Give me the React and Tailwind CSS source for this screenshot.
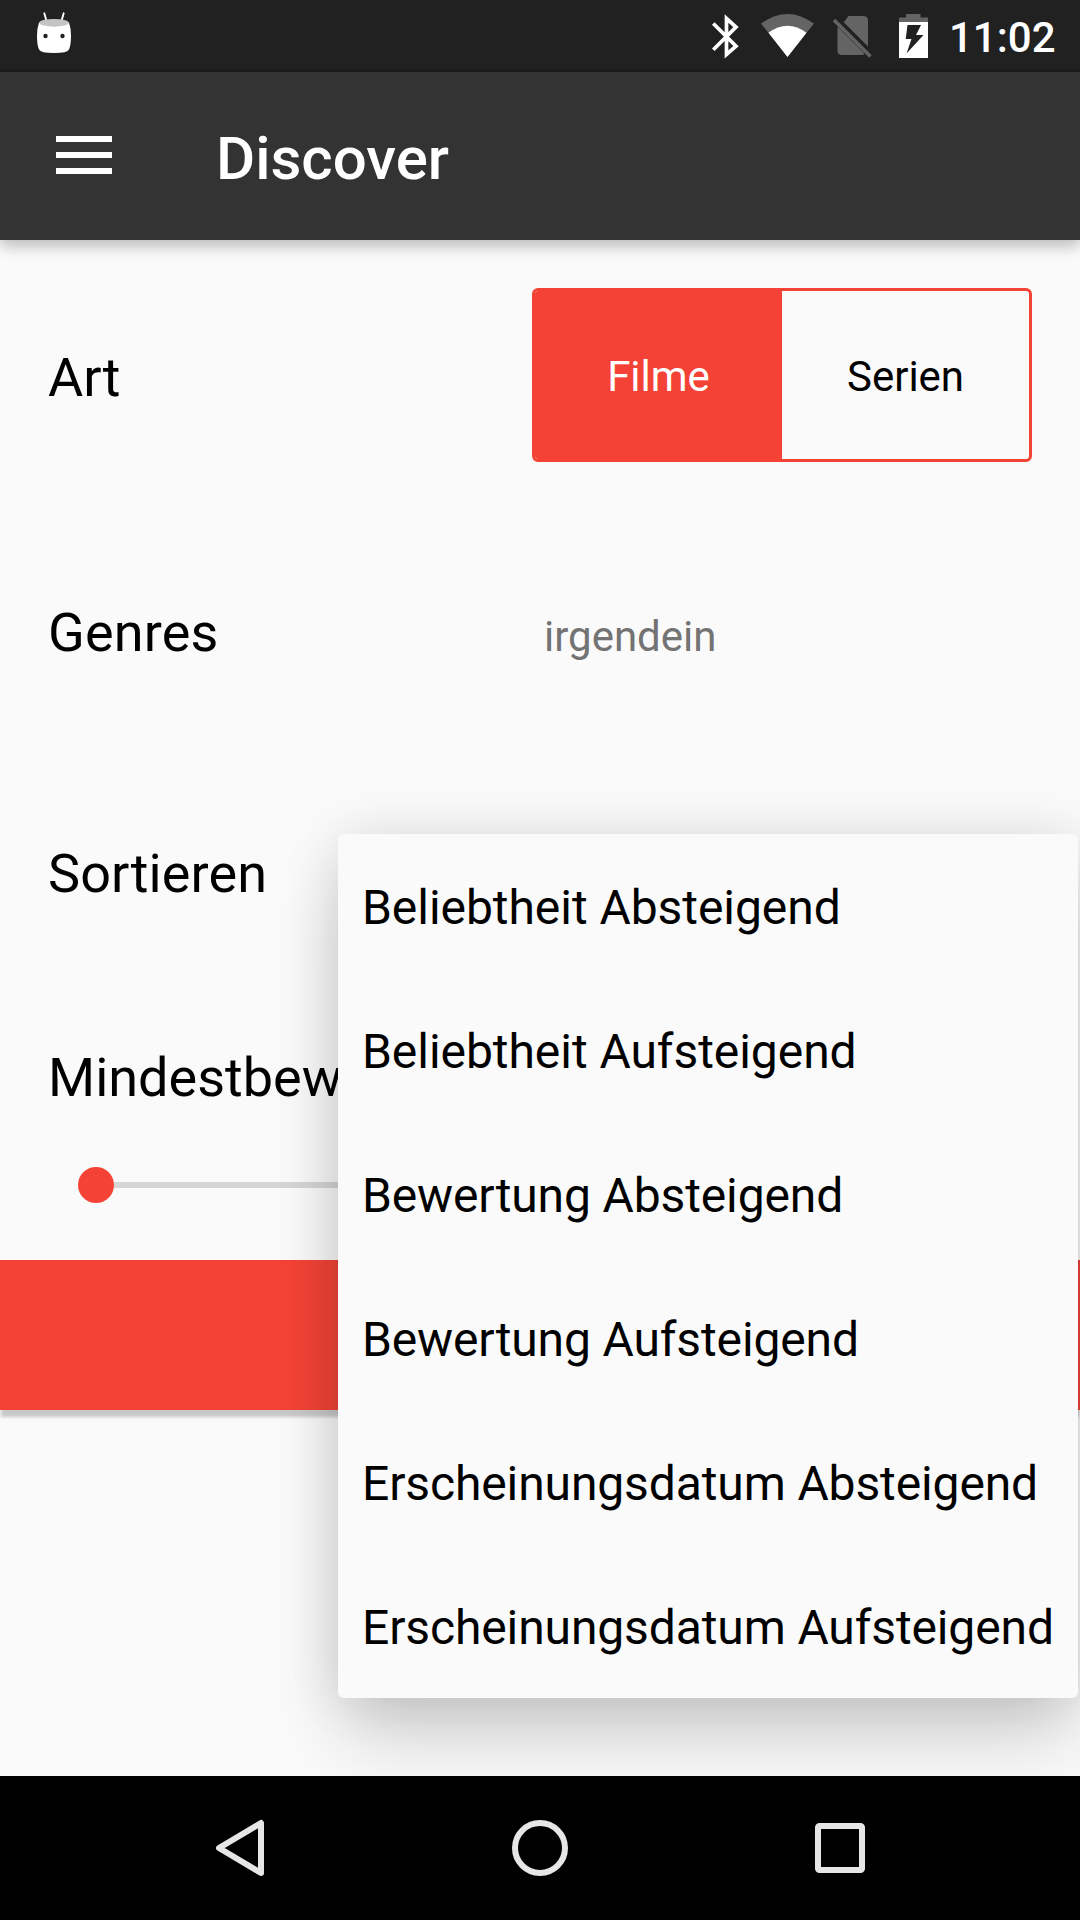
const sortOptions = [
  { label: "Beliebtheit Absteigend", tracking: "tracking-[-0.05px]" },
  { label: "Beliebtheit Aufsteigend", tracking: "tracking-[-0.05px]" },
  { label: "Bewertung Absteigend", tracking: "tracking-[-0.13px]" },
  { label: "Bewertung Aufsteigend", tracking: "tracking-[-0.13px]" },
  { label: "Erscheinungsdatum Absteigend", tracking: "tracking-[-0.12px]" },
  { label: "Erscheinungsdatum Aufsteigend", tracking: "tracking-[-0.12px]" },
];

function StatusBar() {
  return (
    <div className="flex h-[72px] items-start bg-linear-to-b from-[#212121] from-94% to-[#1b1b1b] text-white">
      <svg width="40" height="72" viewBox="34 0 40 72" className="ml-[34px] shrink-0">
        <path d="M44.3 13.3 46.5 21M63.7 13.3 61.5 21" stroke="#fff" strokeWidth="1.9" strokeLinecap="round" />
        <path d="M39 22.5Q54 17 69 22.5Q71 28 71 36Q71 45 69 49.5Q67.500 53 54 53Q40.500 53 39 49.500Q37 45 37 36Q37 28 39 22.500Z" fill="#fff" />
        <ellipse cx="54" cy="22.800" rx="14.700" ry="3.900" fill="#c4c4c4" />
        <circle cx="45.500" cy="36" r="2.200" fill="#212121" />
        <circle cx="62.500" cy="36" r="2.200" fill="#212121" />
      </svg>
      <svg width="240" height="72" viewBox="700 0 240 72" className="ml-[626px] shrink-0">
        <path d="M713.300 23.500 736 46.200 726.500 54.500V18.500L736 27 713.300 49.700" fill="none" stroke="#fff" strokeWidth="3.700" />
        <path d="M787.500 57 761 23.600Q787.500 4.400 814 23.600Z" fill="#646464" />
        <path d="M787.500 57 768.500 32.800Q787.500 18.800 806.500 32.800Z" fill="#fff" />
        <path d="M848.500 16H863.500Q868 16 868 20.500V46.500L843.700 22.300ZM837.500 26.500 864.500 53.500Q863.500 55 861.500 55H842Q837.500 55 837.500 50.500Z" fill="#646464" />
        <path d="M834 20 870.500 56.500" stroke="#646464" strokeWidth="3.600" />
        <path d="M899 22V17.500H906V14H920.500V17.500H928V22Z" fill="#646464" />
        <path d="M899 22H928V58H899Z" fill="#fff" />
        <path d="M907.500 25H921L916 35H923.500L906.500 53.500 911.500 39H905.700Z" fill="#212121" />
      </svg>
      <span className="ml-[9px] mt-[13px] text-[42px] font-medium leading-[49px]">11:02</span>
    </div>
  );
}

function Toolbar() {
  return (
    <header className="z-10 flex h-[168px] items-center bg-[#333333] pl-14 text-white shadow-[0_6px_14px_rgba(0,0,0,0.26)]">
      <div className="mb-[2px] flex w-14 flex-col gap-[10px]">
        <div className="h-[6px] bg-white" />
        <div className="h-[6px] bg-white" />
        <div className="h-[6px] bg-white" />
      </div>
      <h1 className="ml-[104px] mt-[5px] text-[60px] font-medium leading-[70px]">Discover</h1>
    </header>
  );
}

function SortMenu() {
  return (
    <ul className="absolute left-[338px] top-[834px] w-[740px] rounded-[6px] bg-[#fafafa] shadow-[0_0_54px_rgba(0,0,0,0.11),0_42px_72px_-6px_rgba(0,0,0,0.18)]">
      {sortOptions.map(({ label, tracking }) => (
        <li key={label} className={`flex h-36 items-center whitespace-nowrap px-6 pt-[3px] text-5xl leading-[56px] ${tracking}`}>
          {label}
        </li>
      ))}
    </ul>
  );
}

function NavigationBar() {
  return (
    <nav className="z-20 flex h-36 items-center justify-between bg-black px-[210px]">
      <svg width="60" height="60" viewBox="0 0 60 60" fill="none" stroke="#e6e6e6" strokeWidth="6" strokeLinejoin="round">
        <path d="M51 5V55L9 30Z" />
      </svg>
      <svg width="60" height="60" viewBox="0 0 60 60" fill="none" stroke="#e6e6e6" strokeWidth="6">
        <circle cx="30" cy="30" r="25" />
      </svg>
      <svg width="60" height="60" viewBox="0 0 60 60" fill="none" stroke="#e6e6e6" strokeWidth="6">
        <rect x="8" y="8" width="44" height="44" rx="1.500" />
      </svg>
    </nav>
  );
}

export default function App() {
  return (
    <div className="relative flex h-[1920px] w-[1080px] flex-col overflow-hidden bg-[#fafafa] font-['Roboto',sans-serif] text-black">
      <StatusBar />
      <Toolbar />
      <main className="flex flex-1 flex-col text-[54px] leading-[64px]">
        <div className="flex h-[270px] items-center justify-between px-12">
          <span className="pt-[6px]">Art</span>
          <div className="grid h-[174px] w-[500px] grid-cols-2 overflow-hidden rounded-[6px] border-[3px] border-[#f44336] text-[42px] leading-[49px]">
            <div className="flex items-center justify-center bg-[#f44336] pt-[2px] text-white">Filme</div>
            <div className="flex items-center justify-center pt-[2px]">Serien</div>
          </div>
        </div>
        <div className="flex h-[242px] items-center px-12">
          <span className="w-[496px] pt-1 tracking-[0.15px]">Genres</span>
          <span className="pt-[10px] text-[42px] leading-[49px] text-[#737373]">irgendein</span>
        </div>
        <div className="flex h-[240px] items-center px-12">
          <span className="pt-1 tracking-[0.1px]">Sortieren</span>
        </div>
        <div className="h-[268px] px-12 pt-[54px]">
          <div className="w-[290px] overflow-hidden whitespace-nowrap">Mindestbewertung</div>
          <div className="mt-[57px] flex h-9 items-center pl-[30px]">
            <div className="size-9 rounded-full bg-[#f44336]" />
            <div className="h-[6px] flex-1 bg-[#d6d6d6]" />
          </div>
        </div>
        <div className="h-[150px] bg-[#f44336] shadow-[0_8px_3px_-1px_rgba(0,0,0,0.2)]" />
      </main>
      <NavigationBar />
      <SortMenu />
    </div>
  );
}
